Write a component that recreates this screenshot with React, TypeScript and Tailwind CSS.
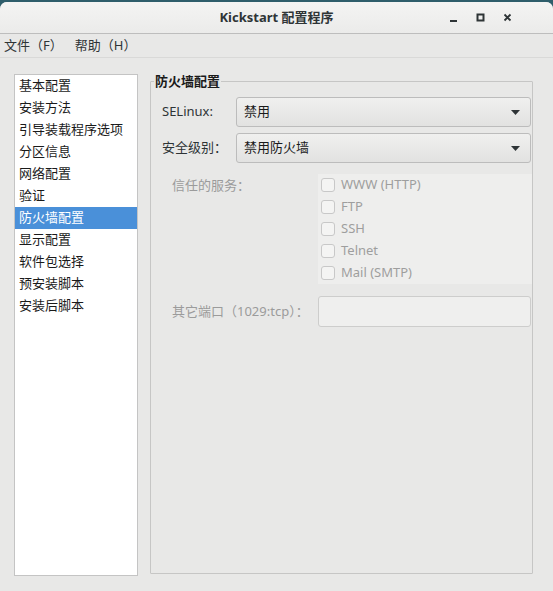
const font = { fontFamily: '"Noto Sans", "Noto Sans CJK SC", sans-serif' };

const sections = [
  '基本配置',
  '安装方法',
  '引导装载程序选项',
  '分区信息',
  '网络配置',
  '验证',
  '防火墙配置',
  '显示配置',
  '软件包选择',
  '预安装脚本',
  '安装后脚本',
];

const services = ['WWW (HTTP)', 'FTP', 'SSH', 'Telnet', 'Mail (SMTP)'];

const Combo = ({ value }: { value: string }) => (
  <div className="flex-1 h-[30px] flex items-center justify-between pl-[7px] pr-[10px] rounded-[3px] border border-[#bcbcbc] bg-gradient-to-b from-[#f0f0ef] to-[#e2e2e1] text-[13px] text-[#1a1a1a]">
    <span>{value}</span>
    <svg width="9" height="5" viewBox="0 0 9 5">
      <path d="M0 0h9L4.5 5z" fill="#2e3436" />
    </svg>
  </div>
);

export default function App() {
  return (
    <div className="w-[553px] h-[591px] bg-[#2f5e6b] flex flex-col" style={font}>
      <div className="mt-[2px] flex-1 flex flex-col rounded-t-[7px] bg-[#e8e8e7] overflow-hidden">
        {/* title bar */}
        <div className="h-[32px] relative flex items-center justify-center bg-gradient-to-b from-[#f4f4f3] to-[#ebebea] border-b border-[#bdbdbd]">
          <span className="text-[13px] font-bold text-[#2e3436]">Kickstart 配置程序</span>
          <div className="absolute right-[40px] top-0 h-full flex items-center gap-[17px]">
            <svg width="10" height="10" viewBox="0 0 10 10">
              <rect x="1" y="7" width="7" height="2" fill="#2e3436" />
            </svg>
            <svg width="10" height="10" viewBox="0 0 10 10">
              <rect x="1.5" y="1.5" width="6" height="6" fill="none" stroke="#2e3436" strokeWidth="2" />
            </svg>
            <svg width="10" height="10" viewBox="0 0 10 10">
              <path d="M1.5 1.5l6 6M7.5 1.5l-6 6" stroke="#2e3436" strokeWidth="1.8" />
            </svg>
          </div>
        </div>

        {/* menu bar */}
        <div className="h-[24px] flex items-center gap-[12px] px-[4px] border-b border-[#d9d9d8] text-[13px] text-[#2e3436]">
          <span>文件（F）</span>
          <span>帮助（H）</span>
        </div>

        {/* body */}
        <div className="flex-1 flex gap-[12px] pl-[14px] pr-[20px] pt-[16px] pb-[15px]">
          <div className="w-[124px] bg-white border border-[#c4c4c4]">
            {sections.map((s) => (
              <div
                key={s}
                className={
                  s === '防火墙配置'
                    ? 'h-[22px] flex items-center px-[4px] text-[13px] bg-[#4a90d9] text-white'
                    : 'h-[22px] flex items-center px-[4px] text-[13px] text-[#1a1a1a]'
                }
              >
                {s}
              </div>
            ))}
          </div>

          <fieldset className="flex-1 border border-[#c6c6c5] rounded-[1px] mb-[2px] -mt-[1px]">
            <legend className="ml-[3px] px-[1px] text-[13px] font-bold text-[#1a1a1a] leading-[16px]">防火墙配置</legend>
            <div className="flex flex-col pt-[8px] pl-[11px] pr-[1px]">
              <div className="flex items-center">
                <span className="w-[74px] text-[13px] text-[#2e3436]">SELinux:</span>
                <Combo value="禁用" />
              </div>
              <div className="flex items-center mt-[6px]">
                <span className="w-[74px] text-[13px] text-[#2e3436]">安全级别：</span>
                <Combo value="禁用防火墙" />
              </div>

              <div className="flex mt-[11px]">
                <span className="w-[156px] pl-[10px] pt-[2px] text-[13px] text-[#9b9b9b]">信任的服务：</span>
                <div className="flex-1 bg-[#eeeeed] mr-[-1px]">
                  {services.map((s) => (
                    <div key={s} className="h-[22px] flex items-center gap-[6px] pl-[3px]">
                      <span className="w-[14px] h-[14px] rounded-[3px] border border-[#c8c8c8] bg-[#f4f4f3]" />
                      <span className="text-[13px] text-[#9e9e9e]">{s}</span>
                    </div>
                  ))}
                </div>
              </div>

              <div className="flex items-center mt-[12px]">
                <span className="w-[156px] pl-[10px] text-[13px] text-[#9b9b9b]">其它端口（1029:tcp）：</span>
                <div className="flex-1 h-[31px] rounded-[3px] border border-[#cdcdcc] bg-[#efefee]" />
              </div>
            </div>
          </fieldset>
        </div>
      </div>
    </div>
  );
}
